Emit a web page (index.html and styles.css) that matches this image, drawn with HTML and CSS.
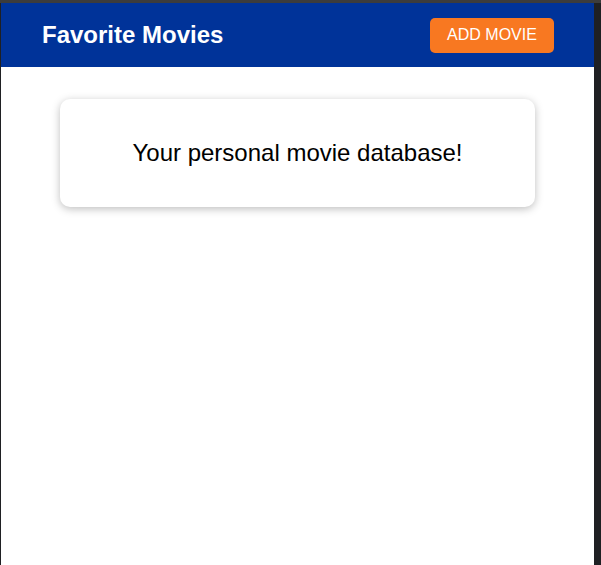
FILE: index.html
```html
<!DOCTYPE html>
<html>
<head>
<meta charset="utf-8">
<link rel="stylesheet" href="styles.css">
</head>
<body>
<div class="frame">
  <div class="app">
    <header class="header">
      <h1 class="title">Favorite Movies</h1>
      <button class="add-btn">ADD MOVIE</button>
    </header>
    <main class="main">
      <section class="card">
        <p class="card-text">Your personal movie database!</p>
      </section>
    </main>
  </div>
</div>
</body>
</html>
```
FILE: styles.css
```css
html, body {
  margin: 0;
  padding: 0;
  height: 100%;
}
body {
  background: #1f2023;
  font-family: "Liberation Sans", Arial, sans-serif;
}
.frame {
  height: 100%;
  box-sizing: border-box;
  border-top: 3px solid #3c3c3c;
  padding-left: 1px;
  padding-right: 7px;
  display: flex;
}
.app {
  flex: 1;
  background: #ffffff;
  display: flex;
  flex-direction: column;
}
.header {
  height: 64px;
  background: #003399;
  display: flex;
  align-items: center;
  justify-content: space-between;
  padding: 0 40px 0 41px;
  box-sizing: border-box;
}
.title {
  margin: 0;
  color: #ffffff;
  font-size: 24px;
  font-weight: bold;
}
.add-btn {
  font-family: "Liberation Sans", Arial, sans-serif;
  font-size: 16px;
  color: #ffffff;
  background: #f87821;
  border: none;
  border-radius: 5px;
  width: 124px;
  height: 35px;
  padding: 0;
}
.main {
  display: flex;
  justify-content: center;
  padding-top: 32px;
}
.card {
  width: 475px;
  height: 108px;
  border-radius: 10px;
  box-shadow: 0 2px 8px rgba(0, 0, 0, 0.26);
  display: flex;
  align-items: center;
  justify-content: center;
}
.card-text {
  margin: 0;
  font-size: 24px;
  color: #000000;
}
```
